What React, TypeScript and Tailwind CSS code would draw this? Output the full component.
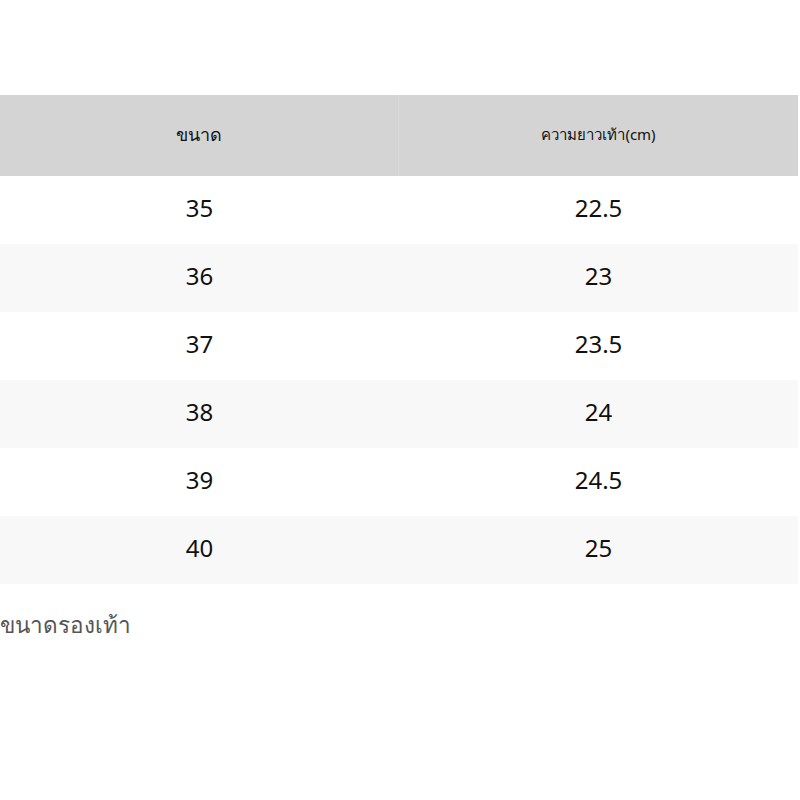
const rows = [
  ["35", "22.5"],
  ["36", "23"],
  ["37", "23.5"],
  ["38", "24"],
  ["39", "24.5"],
  ["40", "25"],
];

export default function App() {
  return (
    <div className="w-[800px] h-[800px] bg-white pt-[95px] font-['Noto_Sans',sans-serif] text-[#111]">
      <div className="w-[798px]">
        <div className="grid grid-cols-2 h-[81px] bg-[#d4d4d4]">
          <div className="flex items-center justify-center pb-[2px] text-[18px] border-r border-[#dadada]">ขนาด</div>
          <div className="flex items-center justify-center pb-[2px] text-[15px]">ความยาวเท้า(cm)</div>
        </div>
        {rows.map((r, i) => (
          <div key={r[0]} className={i % 2 === 1 ? "grid grid-cols-2 h-[68px] bg-[#f8f8f8]" : "grid grid-cols-2 h-[68px] bg-white"}>
            <div className="flex items-center justify-center pb-[4px] text-[24px]">{r[0]}</div>
            <div className="flex items-center justify-center pb-[4px] text-[24px]">{r[1]}</div>
          </div>
        ))}
      </div>
      <p className="mt-[30px] text-[22.5px] text-[#555] leading-none">ขนาดรองเท้า</p>
    </div>
  );
}
